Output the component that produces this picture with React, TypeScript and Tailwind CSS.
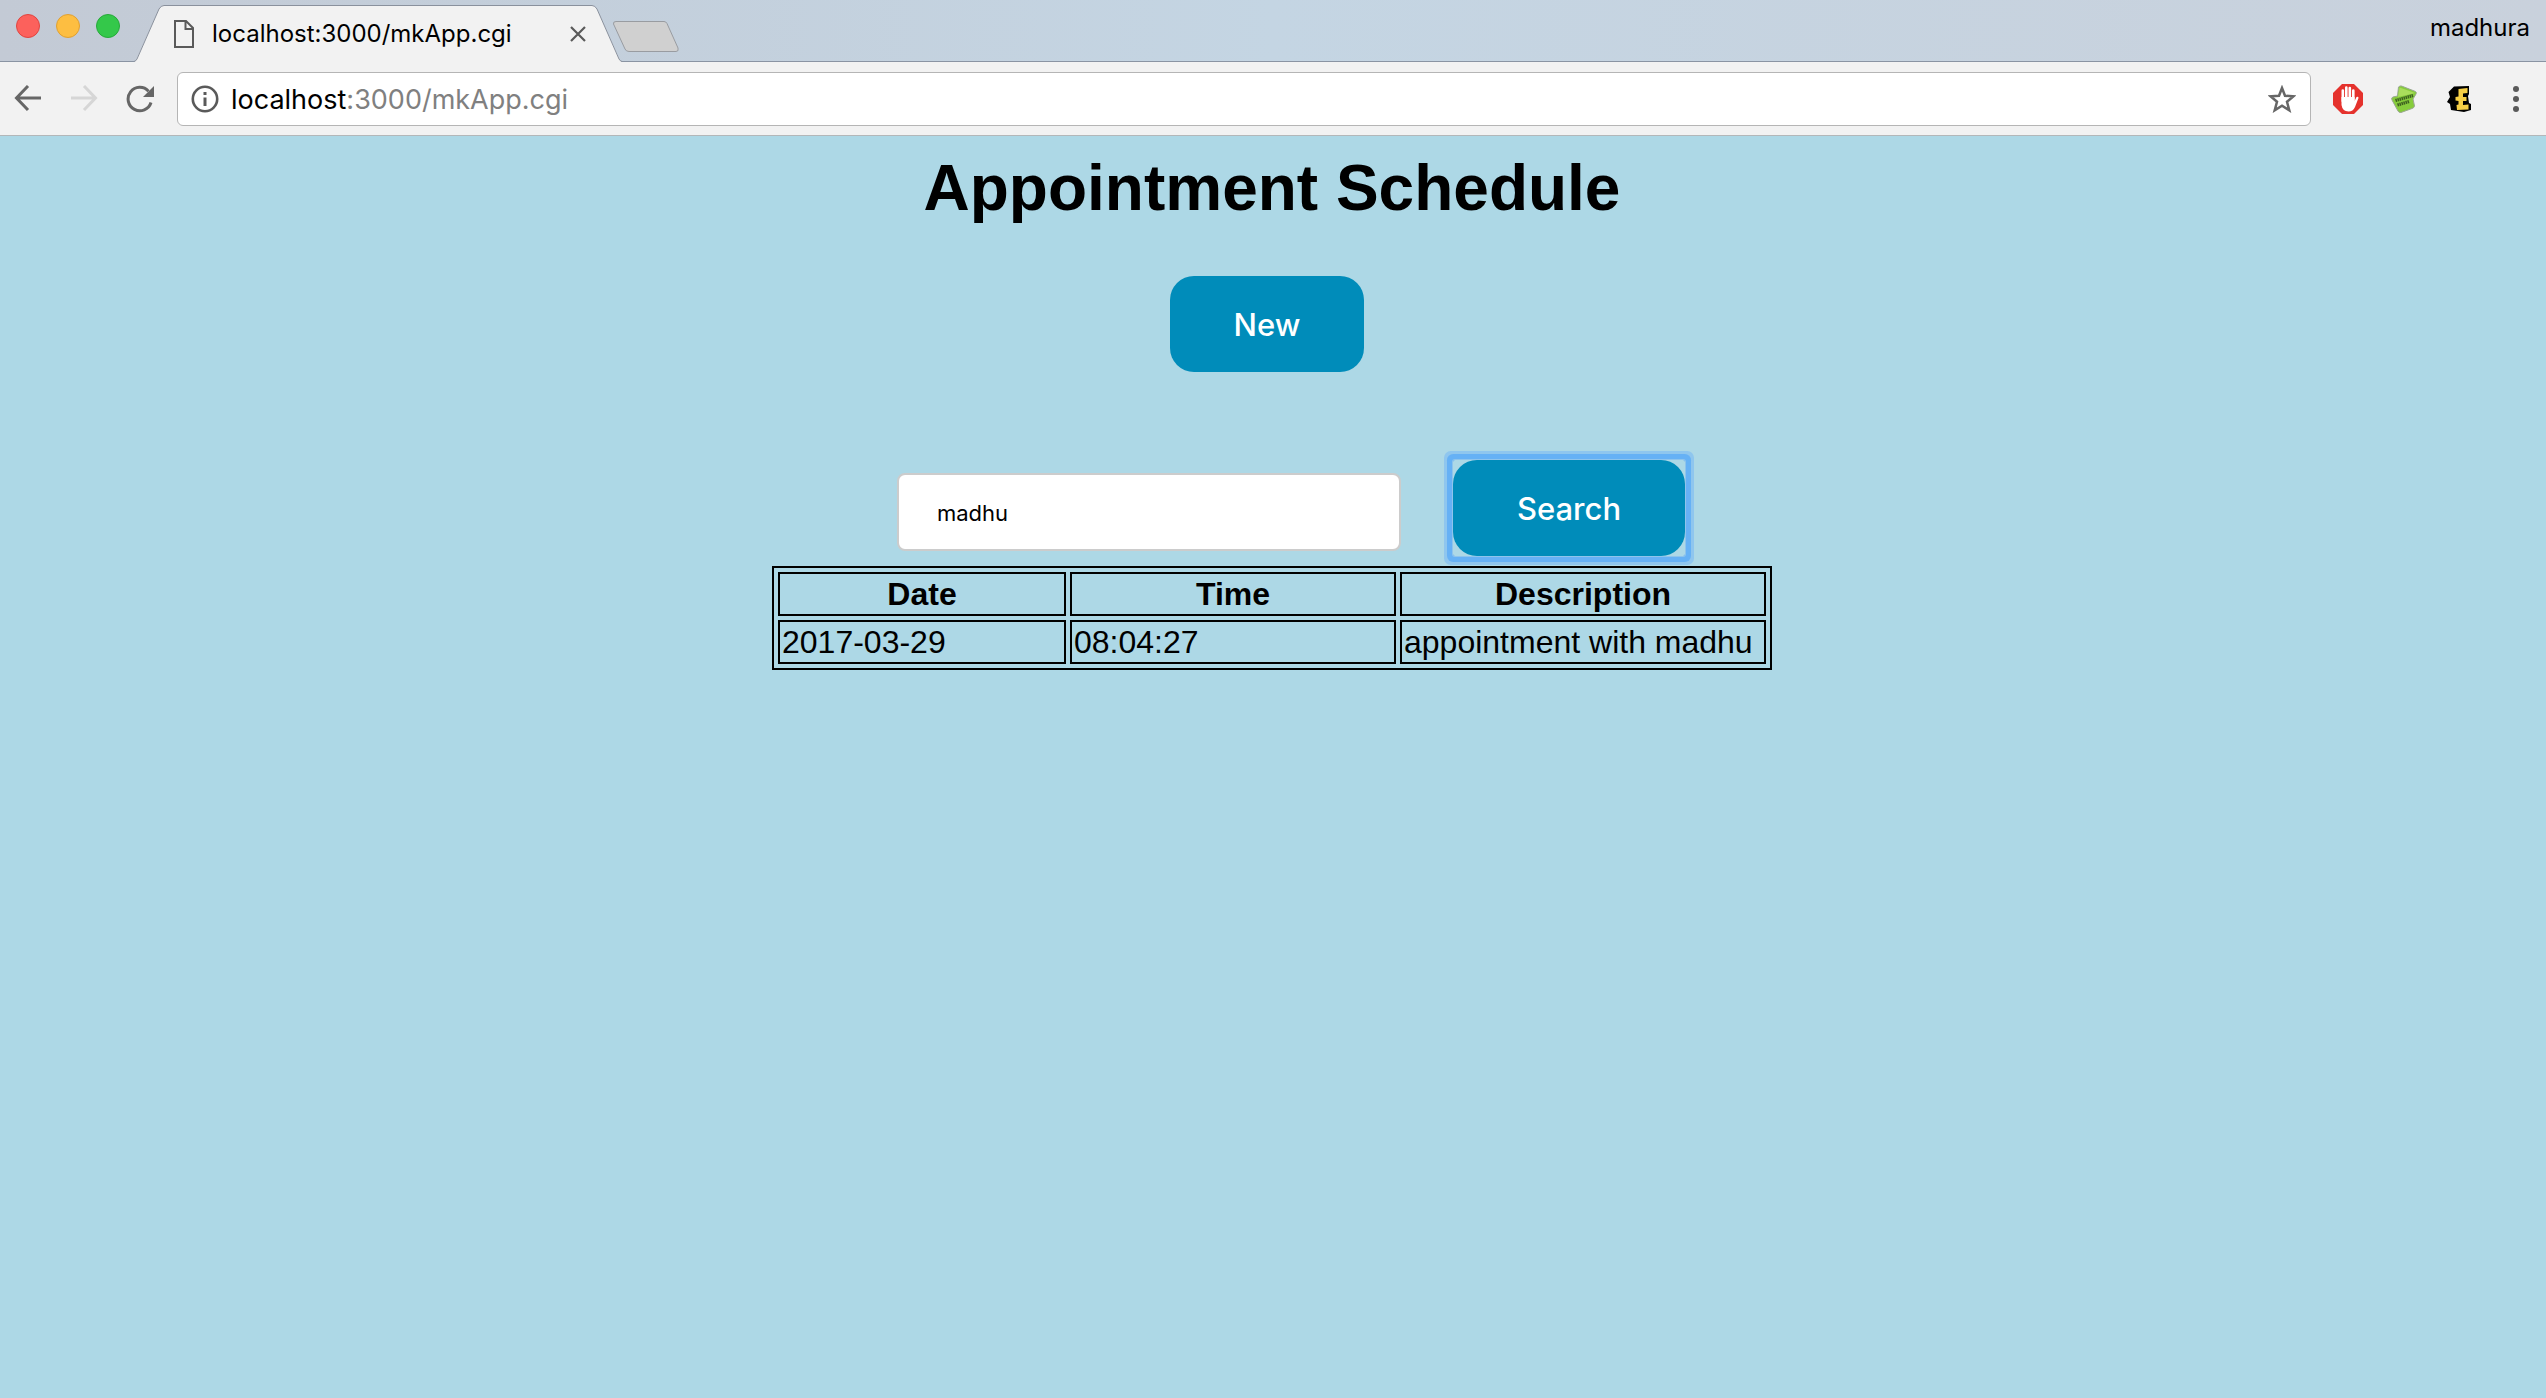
import React from "react";

const rows = [{ date: "2017-03-29", time: "08:04:27", description: "appointment with madhu" }];

function TabStrip() {
  return (
    <div className="flex h-[62px] justify-between border-b border-[#8a94a3] bg-linear-to-r from-[#c3cad5] via-[#c4d5e3] to-[#c9d1dc]">
      <div className="flex">
        <div className="flex gap-4 pt-3.5 pl-4">
          <button aria-label="Close window" className="size-6 rounded-full border border-[#e04540] bg-[#fc615c]" />
          <button aria-label="Minimise window" className="size-6 rounded-full border border-[#e0a032] bg-[#fdbe41]" />
          <button aria-label="Zoom window" className="size-6 rounded-full border border-[#27a93a] bg-[#34c84a]" />
        </div>
        <div className="relative ml-[14px] h-[62px] w-[488px]">
          <svg className="absolute inset-0 size-full" viewBox="0 0 488 62" aria-hidden="true">
            <path d="M0 62 L2 60.5 L25 9 Q27 5.500 30 5.500 H458 Q461 5.500 463 9 L486 60.500 L488 62Z" fill="#f2f2f2" />
            <path d="M0 61.500 Q2 61 3 59 L25 9 Q27 5.500 30 5.500 H458 Q461 5.500 463 9 L485 59 Q486 61 488 61.500" fill="none" stroke="#8a919d" />
          </svg>
          <div className="relative flex h-[62px] items-center pt-1.5 pr-9 pl-10">
            <svg className="h-7 w-5" viewBox="0 0 20 28" fill="none" stroke="#5a5a5a" strokeWidth="2" aria-hidden="true">
              <path d="M1 1H12L19 8V27H1ZM11.500 1V9H19" />
            </svg>
            <span className="ml-[18px] flex-1 text-2xl">localhost:3000/mkApp.cgi</span>
            <button aria-label="Close tab">
              <svg className="size-4" viewBox="0 0 16 16" stroke="#5a5a5a" strokeWidth="2.200">
                <path d="M1 1L15 15M15 1L1 15" />
              </svg>
            </button>
          </div>
        </div>
        <button aria-label="New tab" className="-ml-2.5 self-start pt-5">
          <svg className="h-8 w-[68px]" viewBox="0 0 68 32" fill="#d0d0d0" stroke="#999ca1">
            <path d="M4 1.500H52Q54 1.500 55 3.500L66 28Q67 31.500 64 31.500H17Q14 31.500 13 29L1.500 4Q1 1.500 4 1.500Z" />
          </svg>
        </button>
      </div>
      <span className="pt-3 pr-4 text-2xl">madhura</span>
    </div>
  );
}

function Toolbar() {
  return (
    <div className="flex h-[74px] items-center border-b border-[#b3b7b9] bg-[#f2f2f2]">
      <button aria-label="Back" className="ml-[14px]">
        <svg className="size-7" viewBox="0 0 28 28" fill="none" stroke="#666" strokeWidth="3">
          <path d="M27 13H3M14 1L2.500 13L14 25" />
        </svg>
      </button>
      <button aria-label="Forward" className="ml-7" disabled>
        <svg className="size-7" viewBox="0 0 28 28" fill="none" stroke="#d6d6d6" strokeWidth="3">
          <path d="M1 13H25M14 1L25.500 13L14 25" />
        </svg>
      </button>
      <button aria-label="Reload" className="ml-7">
        <svg className="size-7" viewBox="0 0 28 28" fill="none" stroke="#666" strokeWidth="3">
          <path d="M25 17.500A11.700 11.700 0 1 1 22.500 6.200" />
          <path d="M28 1V12H17Z" fill="#666" stroke="none" />
        </svg>
      </button>
      <div className="ml-[23px] flex h-[54px] flex-1 items-center rounded-md border border-[#b5b5b5] bg-white pr-[14px] pl-[13px]">
        <svg className="size-7" viewBox="0 0 28 28" fill="none" stroke="#5a5a5a" strokeWidth="2.600" aria-hidden="true">
          <circle cx="14" cy="14" r="12.200" />
          <path d="M14 12.500V21M14 7V10" strokeWidth="3" />
        </svg>
        <span className="ml-3 flex-1 pt-0.5 text-[27px] leading-8 text-[#808080]">
          <span className="text-black">localhost</span>:3000/mkApp.cgi
        </span>
        <button aria-label="Bookmark this page">
          <svg className="size-7" viewBox="0 0 28 28" fill="none" stroke="#666" strokeWidth="2.500">
            <path d="M14 3L17 10.800L25.500 11.300L19 16.800L21.300 25.300L14 20.700L6.700 25.300L9 16.800L2.500 11.300L11 10.800Z" />
          </svg>
        </button>
      </div>
      <button aria-label="Ad blocker" className="ml-[22px]">
        <svg className="size-[30px]" viewBox="0 0 30 30">
          <path d="M9 0H21L30 9V21L21 30H9L0 21V9Z" fill="#e5322d" />
          <path d="M9.800 17V6.500M13.300 15V3.500M16.800 15V4M20.300 16V6.500" stroke="#fff" strokeWidth="2.600" strokeLinecap="round" />
          <path d="M8.500 13L21.600 13V17L23.500 13Q25.500 12 25.500 14L22 23Q20 27.500 15.500 27.500Q9.500 27.500 8.500 21Z" fill="#fff" />
        </svg>
      </button>
      <button aria-label="Invisible hand" className="ml-7">
        <svg className="h-7 w-[26px]" viewBox="0 0 26 28">
          <path d="M7.500 2Q9 .5 10.500 1L24.500 6.500Q26 7.500 25 9L22 14L23.500 21Q23 23 21 23.500L10 27.500Q7.500 27.500 7 26L1 15Q0 12.500 2 12L6.500 11Z" fill="#86cc3b" stroke="#9aa891" />
          <path d="M8.500 2.500L24 8L7 12Z" fill="#a9dd5c" />
          <path d="M4.500 15.500L22 10.500M6.500 20L18 16.500" stroke="#3d5f20" strokeWidth="3.200" strokeDasharray="1.500 .6" />
        </svg>
      </button>
      <button aria-label="E extension" className="ml-[30px]">
        <svg className="h-[26px] w-6" viewBox="0 0 24 26">
          <path d="M7 .5L22 0V8L21 10L22 17L24 18V24L17 26L4 24L3 18L0 16L3 11L1.500 6Z" fill="#000" />
          <path d="M11.500 3L20.500 2V7L16 7.500V11H19.500V15H16V19L21.500 18.500V23.500L10 24L9.500 19L11.500 18.500V15L8.500 14.500V11L11.500 10.500Z" fill="#f6cf46" />
        </svg>
      </button>
      <button aria-label="Menu" className="mr-[27px] ml-[42px]">
        <svg className="h-7 w-1.5" viewBox="0 0 6 28" fill="#5a5a5a">
          <circle cx="3" cy="4" r="3" />
          <circle cx="3" cy="14" r="3" />
          <circle cx="3" cy="24" r="3" />
        </svg>
      </button>
    </div>
  );
}

export default function App() {
  const cell = "border-2 border-black p-0.5";
  return (
    <div className="flex min-h-screen flex-col bg-[#add8e6] font-['Inter','Liberation_Sans',sans-serif] text-black">
      <header>
        <TabStrip />
        <Toolbar />
      </header>
      <main className="flex flex-col items-center pt-4 font-['Liberation_Sans',Arial,sans-serif]">
        <h1 className="mr-0.5 text-[64px] leading-[72px] font-bold">Appointment Schedule</h1>
        <button className="mt-[52px] mr-3 h-24 rounded-3xl bg-[#008cba] px-16 pt-0.5 font-['Inter',sans-serif] text-[31px] font-medium text-white">
          New
        </button>
        <form className="mt-20 ml-9 flex items-center gap-[52px]" onSubmit={(e) => e.preventDefault()}>
          <input
            aria-label="Search appointments"
            defaultValue="madhu"
            className="mt-1.5 h-[78px] w-[504px] rounded-lg border-2 border-[#ccc] bg-white px-[38px] pt-0.5 font-['Inter',sans-serif] text-[22px]"
          />
          <div className="mt-2 mb-2.5 rounded-xs shadow-[0_0_0_1px_#8fc4ec,0_0_0_6px_#66b1f5,0_0_0_9px_#8fc6ee]">
            <button className="h-24 rounded-3xl bg-[#008cba] px-16 pt-0.5 font-['Inter',sans-serif] text-[31px] font-medium text-white">
              Search
            </button>
          </div>
        </form>
        <table className="mr-0.5 w-[1000px] border-separate border-spacing-1 border-2 border-black text-[32px] leading-9">
          <thead>
            <tr>
              <th className={cell + " w-[288px]"}>Date</th>
              <th className={cell + " w-[326px]"}>Time</th>
              <th className={cell}>Description</th>
            </tr>
          </thead>
          <tbody>
            {rows.map((row) => (
              <tr key={row.date}>
                <td className={cell}>{row.date}</td>
                <td className={cell}>{row.time}</td>
                <td className={cell}>{row.description}</td>
              </tr>
            ))}
          </tbody>
        </table>
      </main>
    </div>
  );
}
